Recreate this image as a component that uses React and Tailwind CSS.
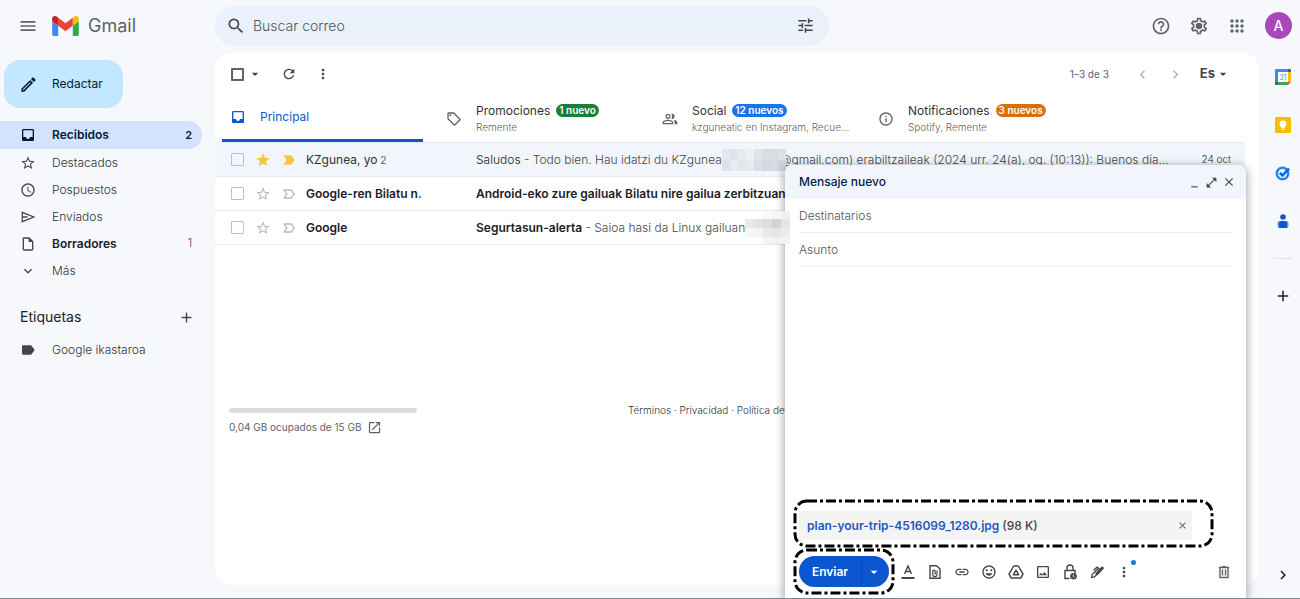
import {
  MdMenu, MdSearch, MdTune, MdHelpOutline, MdOutlineSettings, MdOutlineEdit, MdInbox,
  MdStar, MdStarBorder, MdAccessTime, MdOutlineInsertDriveFile, MdExpandMore, MdAdd,
  MdLabel, MdRefresh, MdMoreVert, MdOutlineSell, MdOutlinePeopleAlt, MdInfoOutline, MdLabelImportant,
  MdLabelImportantOutline, MdChevronLeft, MdChevronRight, MdArrowDropDown, MdOpenInNew, MdMinimize,
  MdOpenInFull, MdClose, MdLink, MdOutlineInsertEmoticon, MdOutlineImage,
} from 'react-icons/md';

const SendIcon = ({ className }) => (
  <svg viewBox="0 0 16 16" className={`size-4 ${className}`} fill="none" stroke="currentColor" strokeWidth="1.300">
    <path d="M2.300 3.300 13.800 8 2.300 12.700zM2.300 8H7.500" />
  </svg>
);

const AppsIcon = () => (
  <svg viewBox="0 0 20 20" className="size-5" fill="currentColor">
    {[5, 10, 15].map((y) => [5, 10, 15].map((x) => <circle key={`${x}-${y}`} cx={x} cy={y} r="1.700" />))}
  </svg>
);

const TrashIcon = () => (
  <svg viewBox="0 0 16 16" className="size-4" fill="none" stroke="currentColor" strokeWidth="1.400">
    <path d="M2.800 3.500h10.400M6 2.800h4M4 3.500v10h8v-10" />
    <path d="M6.500 5.500v6M9.500 5.500v6" />
  </svg>
);

const folders = [
  { label: 'Destacados', icon: MdStarBorder },
  { label: 'Pospuestos', icon: MdAccessTime },
  { label: 'Enviados', icon: SendIcon },
  { label: 'Borradores', icon: MdOutlineInsertDriveFile, count: 1, bold: true },
  { label: 'Más', icon: MdExpandMore },
];

const tabs = [
  { label: 'Promociones', icon: MdOutlineSell, badge: '1 nuevo', color: 'bg-[#188038]', detail: 'Remente' },
  { label: 'Social', icon: MdOutlinePeopleAlt, badge: '12 nuevos', color: 'bg-[#1a73e8]', detail: 'kzguneatic en Instagram, Recue...' },
  { label: 'Notificaciones', icon: MdInfoOutline, badge: '3 nuevos', color: 'bg-[#d96f0b]', detail: 'Spotify, Remente' },
];

const GmailLogo = () => (
  <svg viewBox="52 42 88 66" className="h-5 w-[27px]" aria-hidden="true">
    <path fill="#4285f4" d="M58 108h14V74L52 59v43c0 3.300 2.700 6 6 6" />
    <path fill="#34a853" d="M120 108h14c3.300 0 6-2.700 6-6V59l-20 15" />
    <path fill="#fbbc04" d="M120 48v26l20-15v-8c0-7.400-8.500-11.700-14.400-7.200" />
    <path fill="#ea4335" d="M72 74V48l24 18 24-18v26L96 92" />
    <path fill="#c5221f" d="M52 51v8l20 15V48l-5.600-4.200C60.500 39.300 52 43.600 52 51" />
  </svg>
);

// Redacted part of an address, drawn as coarse blocks
const Mosaic = ({ cells, className }) => (
  <span className={`inline-grid align-middle ${className}`} aria-hidden="true">
    {cells.map((color, i) => (
      <span key={i} style={{ backgroundColor: color }} />
    ))}
  </span>
);

const addressCells = [
  '#e6e8ee', '#e2e4ea', '#e6e9f0', '#eceff6', '#e2e4ea', '#dadce2', '#d9dbe1', '#dddfe6',
  '#dfe1e7', '#e8ebf1', '#e4e6ec', '#e6e9ef', '#dcdee5', '#d5d7de', '#d8dae1', '#d2d4dc',
];

const deviceCells = [
  '#ffffff', '#ffffff', '#fafafa', '#f6f6f6', '#f0f0f0',
  '#e8e8e8', '#e2e2e2', '#dedede', '#d3d3d3', '#e6e6e6',
  '#f6f6f6', '#f4f4f4', '#e9e9e9', '#e6e6e6', '#ebebeb',
  '#ffffff', '#ffffff', '#f4f4f4', '#f2f2f2', '#f3f3f3',
];

// Dash-dot outline around a block
const Highlight = ({ className }) => (
  <svg className={`pointer-events-none absolute overflow-visible ${className}`} aria-hidden="true">
    <rect width="100%" height="100%" rx="12" fill="none" stroke="#000" strokeWidth="3" strokeDasharray="10 3 3 3" />
  </svg>
);

const Header = () => (
  <header className="flex h-[53px] shrink-0 items-center pr-2 pb-0.5">
    <div className="flex w-[215px] shrink-0 items-center">
      <button aria-label="Menú principal" className="ml-[18px] text-[#5f6368]">
        <MdMenu size={20} />
      </button>
      <a href="#" className="ml-3.5 flex items-center gap-[9px] text-lg text-[#5f6368]">
        <GmailLogo />
        Gmail
      </a>
    </div>
    <div className="flex h-10 w-[614px] items-center rounded-full bg-[#eaf1fb] pr-3.5 pl-[11px] text-[#444746]">
      <button aria-label="Buscar">
        <MdSearch size={20} />
      </button>
      <input
        aria-label="Buscar correo"
        placeholder="Buscar correo"
        className="ml-[7px] min-w-0 flex-1 text-sm font-light outline-none placeholder:text-[#505458]"
      />
      <button aria-label="Opciones de búsqueda">
        <MdTune size={19} />
      </button>
    </div>
    <div className="ml-auto flex items-center gap-[18px] text-[#5f6368]">
      <button aria-label="Ayuda"><MdHelpOutline size={20} /></button>
      <button aria-label="Configuración" className="relative">
        <MdOutlineSettings size={20} />
        <span className="absolute inset-[7px] rounded-full bg-current" />
      </button>
      <button aria-label="Aplicaciones"><AppsIcon /></button>
      <button aria-label="Cuenta" className="size-[27px] rounded-full bg-[#ab47bc] text-sm font-medium text-white">
        A
      </button>
    </div>
  </header>
);

const Sidebar = () => (
  <nav className="w-[215px] shrink-0 pt-[7px] text-xs font-light text-[#303336]">
    <button className="ml-1 flex h-12 w-[119px] items-center gap-3.5 rounded-2xl bg-[#c2e7ff] pl-[15px] font-normal text-[#001d35]">
      <MdOutlineEdit size={19} />
      Redactar
    </button>
    <ul className="mt-[13px] w-[202px]">
      <li>
        <a href="#" className="flex h-7 items-center rounded-r-full bg-[#d3e3fd] pr-2.5 pl-5 font-semibold text-[#001d35]">
          <MdInbox size={16} />
          <span className="ml-4 flex-1">Recibidos</span>
          <span className="text-[11px]">2</span>
        </a>
      </li>
      {folders.map(({ label, icon: Icon, count, bold }) => (
        <li key={label}>
          <a href="#" className={`flex h-[27px] items-center pr-2.5 pl-5 ${bold ? 'font-semibold text-[#202124]' : ''}`}>
            <Icon size={16} className="text-[#444746]" />
            <span className="ml-4 flex-1">{label}</span>
            {count && <span className="text-[11px] font-light text-[#444746]">{count}</span>}
          </a>
        </li>
      ))}
    </ul>
    <div className="mt-[23px] flex w-[202px] items-center justify-between pr-[7px] pl-5 text-[#202124]">
      <h2 className="text-sm font-normal">Etiquetas</h2>
      <button aria-label="Crear etiqueta" className="text-[#444746]"><MdAdd size={17} /></button>
    </div>
    <a href="#" className="mt-[9px] flex h-7 items-center gap-4 pl-5">
      <MdLabel size={16} className="text-[#444746]" />
      Google ikastaroa
    </a>
  </nav>
);

const Toolbar = () => (
  <div className="flex h-[42px] items-center pr-7 pl-4 text-[#444746]">
    <input
      type="checkbox"
      aria-label="Seleccionar"
      className="size-[13px] appearance-none rounded-[1px] border-2 border-[#5f6368]"
    />
    <button aria-label="Más selecciones" className="ml-[3px]"><MdArrowDropDown size={16} /></button>
    <button aria-label="Actualizar" className="ml-[18px]"><MdRefresh size={16} /></button>
    <button aria-label="Más" className="ml-[18px]"><MdMoreVert size={16} /></button>
    <span className="ml-auto text-[10px] text-[#5f6368]">1–3 de 3</span>
    <button aria-label="Anterior" className="ml-[25px] text-[#b0b3b6]"><MdChevronLeft size={17} /></button>
    <button aria-label="Siguiente" className="ml-4 text-[#b0b3b6]"><MdChevronRight size={17} /></button>
    <button className="ml-4 flex items-center text-[13px] font-bold">
      Es
      <MdArrowDropDown size={16} />
    </button>
  </div>
);

const CategoryTabs = () => (
  <div className="flex h-[47px] pl-[7px] text-xs text-[#303336]">
    <button className="mr-[15px] flex w-[201px] shrink-0 items-center gap-3.5 border-b-3 border-[#0b57d0] pl-2 text-[#0b57d0]">
      <MdInbox size={16} />
      Principal
    </button>
    {tabs.map(({ label, icon: Icon, badge, color, detail }) => (
      <button key={label} className="flex w-[216px] shrink-0 items-center gap-3.5 pl-2 text-left">
        <Icon size={16} className="text-[#5f6368]" />
        <span>
          <span className="flex items-center gap-1.5">
            {label}
            <span className={`rounded-full px-[3px] text-[10px] leading-[13px] font-semibold text-white ${color}`}>{badge}</span>
          </span>
          <span className="block text-[10px] leading-4 font-light whitespace-nowrap text-[#5f6368]">{detail}</span>
        </span>
      </button>
    ))}
  </div>
);

const MailRow = ({ sender, count, subject, date, read, children }) => (
  <tr className={`h-[34px] border-b border-[#e8eaed] ${read ? 'bg-[#f2f6fc]' : ''}`}>
    <td className="w-[91px] pl-4">
      <div className="flex items-center">
        <input
          type="checkbox"
          aria-label={`Seleccionar ${sender}`}
          className="size-[13px] appearance-none rounded-[1px] border border-[#bdc1c6]"
        />
        <button aria-label="Destacar" className="ml-[11px]">
          {read ? <MdStar size={16} className="text-[#f4c543]" /> : <MdStarBorder size={16} className="text-[#b6b9bd]" />}
        </button>
        <button aria-label="Importante" className="ml-2.5">
          {read
            ? <MdLabelImportant size={16} className="text-[#f4c543]" />
            : <MdLabelImportantOutline size={16} className="text-[#b6b9bd]" />}
        </button>
      </div>
    </td>
    <td className={`w-[170px] truncate ${read ? '' : 'font-semibold text-[#202124]'}`}>
      {sender}
      {count && <span className="text-[10px] text-[#5f6368]"> {count}</span>}
    </td>
    <td className="overflow-hidden font-light whitespace-nowrap text-[#444746]">
      <span className={read ? 'text-[#202124]' : 'font-semibold text-[#202124]'}>{subject}</span>
      {children}
    </td>
    <td className="w-[60px] pr-3.5 text-right text-[10px] font-light">{date}</td>
  </tr>
);

const MailList = () => (
  <table className="w-full table-fixed border-t border-[#e8eaed] text-xs text-[#303336]">
    <tbody>
      <MailRow sender="KZgunea, yo" count={2} subject="Saludos" date="24 oct" read>
        {' - Todo bien. Hau idatzi du KZgunea'}
        <Mosaic cells={addressCells} className="relative -my-1 -mr-1.5 h-[22px] w-16 grid-cols-8" />
        {'@gmail.com) erabiltzaileak (2024 urr. 24(a), og. (10:13)): Buenos día...'}
      </MailRow>
      <MailRow sender="Google-ren Bilatu n." subject="Android-eko zure gailuak Bilatu nire gailua zerbitzuan" />
      <MailRow sender="Google" subject="Segurtasun-alerta">
        {' - Saioa hasi da Linux gailuan'}
        <Mosaic cells={deviceCells} className="relative z-20 -my-3 h-[37px] w-[45px] grid-cols-5" />
      </MailRow>
    </tbody>
  </table>
);

const SendButton = () => (
  <div className="relative flex h-[31px] shrink-0 rounded-full bg-[#0b57d0] text-white">
    <button className="w-[62px] text-xs font-semibold">Enviar</button>
    <button aria-label="Más opciones de envío" className="flex w-7 items-center justify-center border-l border-[#0a4ab3] pr-1">
      <MdArrowDropDown size={16} />
    </button>
    <Highlight className="-top-1.5 -left-1 h-[43px] w-[98px]" />
  </div>
);

const ComposeTools = () => (
  <div className="flex items-center gap-[11px] text-[#444746]">
    <button aria-label="Opciones de formato">
      <svg viewBox="0 0 16 16" className="size-4" fill="none" stroke="currentColor">
        <path d="M4.500 10 8 2l3.500 8M5.700 7.500h4.600" strokeWidth="1.400" />
        <path d="M1.500 14h13" strokeWidth="2" />
      </svg>
    </button>
    <button aria-label="Adjuntar archivos">
      <svg viewBox="0 0 16 16" className="size-4" fill="none" stroke="currentColor" strokeWidth="1.400">
        <path d="M3 1.700h6.500L13 5v9.300H3z" />
        <path d="M10 6.500v4a2 2 0 0 1-4.200 0V7.300a1.200 1.200 0 0 1 2.400 0v3.200" strokeWidth="1.200" />
      </svg>
    </button>
    <button aria-label="Insertar enlace"><MdLink size={16} /></button>
    <button aria-label="Insertar emoji"><MdOutlineInsertEmoticon size={16} /></button>
    <button aria-label="Insertar desde Drive">
      <svg viewBox="0 0 16 16" className="size-4" fill="none" stroke="currentColor" strokeWidth="1.500" strokeLinejoin="round">
        <path d="M5.700 2h4.600L15 10.200 12.800 14H3.200L1 10.200z" />
        <path d="M8 6.200 5.300 10.800h5.400z" />
      </svg>
    </button>
    <button aria-label="Insertar foto"><MdOutlineImage size={16} /></button>
    <button aria-label="Modo confidencial">
      <svg viewBox="0 0 16 16" className="size-4" fill="none" stroke="currentColor" strokeWidth="1.400">
        <path d="M7.500 14.500H3v-8h10v3M5 6.500V4a3 3 0 0 1 6 0v2.500" />
        <circle cx="11.500" cy="12.200" r="3.300" fill="currentColor" stroke="none" />
        <path d="M11.300 10.500v2l1.300.8" stroke="#fff" strokeWidth="0.800" />
      </svg>
    </button>
    <button aria-label="Insertar firma">
      <svg viewBox="0 0 16 16" className="size-4" fill="none" stroke="currentColor" strokeWidth="1.300">
        <path d="m2.500 13.500.7-3 6.300-6.300 2.300 2.300-6.300 6.300z" />
        <path d="M7 9.500 12.800 3.200a1 1 0 0 1 1.300 1.300L8.500 10.500z" fill="currentColor" />
        <path d="M9.500 4.200 8 3.200 4.500 6.500" />
      </svg>
    </button>
    <button aria-label="Más opciones" className="relative">
      <MdMoreVert size={16} />
      <span className="absolute -top-1 -right-1 size-[5px] rounded-full bg-[#1a73e8]" />
    </button>
  </div>
);

const ComposeWindow = () => (
  <section className="absolute top-[165px] right-[54px] bottom-0 z-10 flex w-[461px] flex-col rounded-t-lg bg-white text-xs shadow-[0_2px_10px_1px_rgba(0,0,0,0.35)]">
    <div className="flex h-[34px] shrink-0 items-center gap-1 rounded-t-lg bg-[#f2f6fc] pr-2.5 pl-3.5 text-[#444746]">
      <h2 className="flex-1 font-medium text-[#041e49]">Mensaje nuevo</h2>
      <button aria-label="Minimizar"><MdMinimize size={13} /></button>
      <button aria-label="Pantalla completa"><MdOpenInFull size={13} /></button>
      <button aria-label="Cerrar"><MdClose size={14} /></button>
    </div>
    <div className="flex flex-1 flex-col px-3.5">
      <input aria-label="Destinatarios" placeholder="Destinatarios" className="h-[34px] border-b border-[#eceef0] font-light outline-none placeholder:text-[#505458]" />
      <input aria-label="Asunto" placeholder="Asunto" className="h-[34px] border-b border-[#eceef0] font-light outline-none placeholder:text-[#505458]" />
      <textarea aria-label="Cuerpo del mensaje" className="min-h-0 flex-1 resize-none outline-none" />
      <div className="relative mr-10 flex h-[29px] shrink-0 items-center bg-[#f4f4f4] px-2 font-semibold">
        <a href="#" className="text-[#1f57c3]">plan-your-trip-4516099_1280.jpg</a>
        <span className="ml-[3px] flex-1 font-medium text-[#444746]">(98 K)</span>
        <button aria-label="Quitar archivo" className="-mr-1 text-[#5f6368]"><MdClose size={11} /></button>
        <Highlight className="-top-2.5 -left-1 h-[45px] w-[417px]" />
      </div>
      <div className="mt-4 mb-[11px] flex items-center gap-[11px]">
        <SendButton />
        <ComposeTools />
        <button aria-label="Descartar borrador" className="ml-auto text-[#5f6368]"><TrashIcon /></button>
      </div>
    </div>
  </section>
);

const CalendarIcon = () => (
  <svg viewBox="0 0 16 16" className="size-4">
    <path fill="#4285f4" d="M0 1a1 1 0 0 1 1-1h12v3H3v10H0z" />
    <path fill="#1967d2" d="M13 0h2a1 1 0 0 1 1 1v2h-3z" />
    <path fill="#fbbc04" d="M13 3h3v10h-3z" />
    <path fill="#34a853" d="M3 13h10v3H3z" />
    <path fill="#188038" d="M0 13h3v3H1a1 1 0 0 1-1-1z" />
    <path fill="#ea4335" d="M13 13h3l-3 3z" />
    <path fill="#fff" d="M3 3h10v10H3z" />
    <text x="8" y="10.500" textAnchor="middle" fontSize="7" fill="#4285f4">31</text>
  </svg>
);

const KeepIcon = () => (
  <svg viewBox="0 0 16 16" className="size-4">
    <rect width="16" height="16" rx="1.500" fill="#fbbc04" />
    <circle cx="8" cy="7" r="3.400" fill="#fff" />
    <path fill="#fff" d="M6.300 9h3.400v2H6.300zM6.300 11.500h3.400v1.300H6.300z" />
  </svg>
);

const TasksIcon = () => (
  <svg viewBox="0 0 16 16" className="size-4" fill="none">
    <circle cx="7.500" cy="8.500" r="5.700" stroke="#2684fc" strokeWidth="2.500" />
    <path d="m4.800 7.800 2.700 2.700L14 3.500" stroke="#0066da" strokeWidth="2.500" />
  </svg>
);

const ContactsIcon = () => (
  <svg viewBox="0 0 16 16" className="size-4">
    <circle cx="8" cy="4" r="2.800" fill="#1a57c9" />
    <rect x="2.500" y="8" width="11" height="7" rx="2.500" fill="#5e97f6" />
    <path fill="#0b57d0" d="M4 10.500A2.500 2.500 0 0 1 6.500 8h3a2.500 2.500 0 0 1 2.500 2.500V15H4z" />
  </svg>
);

const SideRail = () => (
  <aside className="flex w-[41px] shrink-0 flex-col items-center pt-4 pb-3.5 pl-[7px] text-[#202124]">
    <div className="flex flex-col gap-8">
      <button aria-label="Calendar"><CalendarIcon /></button>
      <button aria-label="Keep"><KeepIcon /></button>
      <button aria-label="Tasks"><TasksIcon /></button>
      <button aria-label="Contactos"><ContactsIcon /></button>
    </div>
    <hr className="mt-[29px] w-[18px] border-[#dfe1e5]" />
    <button aria-label="Obtener complementos" className="mt-7"><MdAdd size={18} /></button>
    <button aria-label="Ocultar panel lateral" className="mt-auto"><MdChevronRight size={18} /></button>
  </aside>
);

export default function App() {
  return (
    <div className="relative flex h-screen flex-col overflow-hidden border-b border-[#80868b] bg-[#f6f8fc] font-[Inter,sans-serif] text-[#202124]">
      <Header />
      <div className="flex min-h-0 flex-1">
        <Sidebar />
        <main className="mb-[13px] min-w-0 flex-1 rounded-2xl bg-white">
          <Toolbar />
          <div className="mr-3.5">
            <CategoryTabs />
            <MailList />
          </div>
          <footer className="mt-[163px] flex text-[10px] text-[#5f6368]">
            <div className="ml-3.5 w-[188px]">
              <div className="h-[5px] rounded-full bg-[#dadce0]" />
              <a href="#" className="mt-[7px] flex items-center gap-1.5">
                0,04 GB ocupados de 15 GB
                <MdOpenInNew size={15} />
              </a>
            </div>
            <p className="ml-[211px] leading-1 font-light whitespace-nowrap text-[#303336]">
              <a href="#">Términos</a> · <a href="#">Privacidad</a> · <a href="#">Política del programa</a>
            </p>
          </footer>
        </main>
        <SideRail />
      </div>
      <ComposeWindow />
    </div>
  );
}
